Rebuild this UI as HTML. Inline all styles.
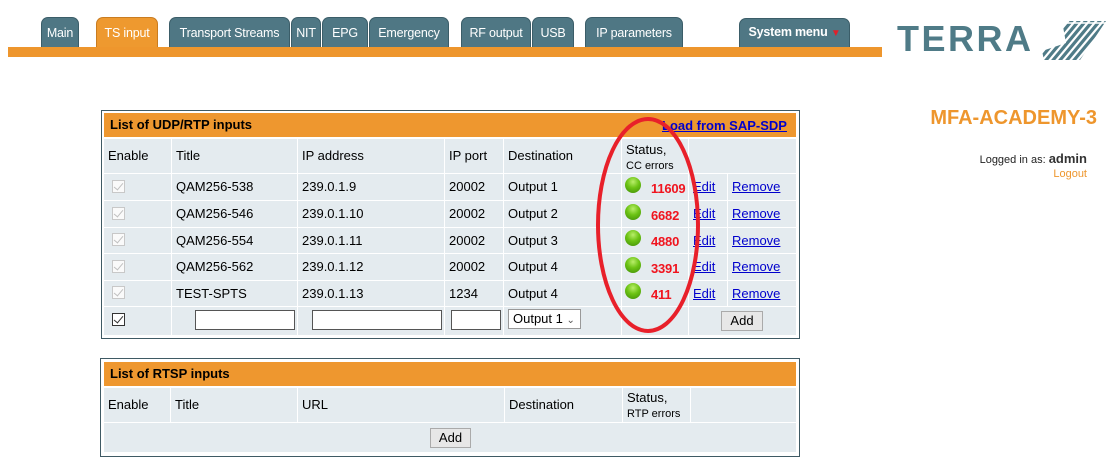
<!DOCTYPE html>
<html><head><meta charset="utf-8"><style>
*{margin:0;padding:0;box-sizing:border-box}
body{width:1115px;height:475px;background:#fff;font-family:"Liberation Sans",Arial,sans-serif;font-size:13px;color:#000;position:relative;overflow:hidden}
.tab{position:absolute;top:17px;height:30px;background:#4f7784;border:1px solid #3b5d68;border-bottom:none;border-radius:7px 7px 0 0;color:#fff;font-size:12.5px;text-align:center;line-height:30px;letter-spacing:-0.2px}
.tab.on{background:#ee992f;border-color:#c97c20}
.bar{position:absolute;left:8px;top:47px;width:874px;height:10px;background:#ee962d}
.a{position:absolute}
.box{position:absolute;border:1px solid #3f5a64;background:#fff}
.hd{position:absolute;background:#ee972f;font-weight:bold;font-size:13px;line-height:24px;padding-left:6px}
.c{position:absolute;background:#e4ebef;line-height:26px;padding-left:4px;white-space:nowrap}
.cb{position:absolute;width:13px;height:13px;border:1px solid #c8c8c8;background:#fafafa}
.cb::after{content:"";position:absolute;left:3px;top:0px;width:4px;height:8px;border:solid #c0c0c0;border-width:0 1px 1px 0;transform:rotate(40deg)}
.cb.k{border-color:#333;background:#fff}
.cb.k::after{border-color:#333}
.led{position:absolute;width:16px;height:16px;border-radius:50%;background:radial-gradient(circle at 50% 30%,#b9ee6a 0,#6cc314 45%,#3d8a06 100%)}
.err{position:absolute;color:#f0141e;font-weight:bold;font-size:13px;letter-spacing:-0.2px}
a{color:#00c;text-decoration:underline}
.inp{position:absolute;height:20px;border:1px solid #555;background:#fff}
.btn{position:absolute;height:20px;border:1px solid #aaa;background:#e7e7e7;text-align:center;line-height:18px;font-size:13px}
</style></head><body>
<div class="tab" style="left:41px;width:38px">Main</div>
<div class="tab on" style="left:96px;width:62px">TS input</div>
<div class="tab" style="left:169px;width:121px">Transport Streams</div>
<div class="tab" style="left:291px;width:30px">NIT</div>
<div class="tab" style="left:322px;width:46px">EPG</div>
<div class="tab" style="left:369px;width:80px">Emergency</div>
<div class="tab" style="left:461px;width:70px">RF output</div>
<div class="tab" style="left:532px;width:42px">USB</div>
<div class="tab" style="left:585px;width:98px">IP parameters</div>
<div class="tab" style="left:739px;top:18px;height:29px;width:111px;font-weight:bold;line-height:26px">System menu <span style="color:#e0202a;font-size:10px">&#9660;</span></div>
<div class="bar"></div>

<div class="a" style="left:897px;top:19px;font-size:36px;line-height:40px;font-weight:bold;color:#4f7b87;letter-spacing:2.5px">TERRA</div>
<svg class="a" style="left:1040px;top:21px" width="68" height="40" viewBox="0 0 68 40">
<defs><clipPath id="cp"><polygon points="22,0 66,0 40,39 4,39 2,30 26,22"/></clipPath></defs>
<g clip-path="url(#cp)" stroke="#4f7b87" stroke-width="3.2">
<line x1="-10" y1="50" x2="40" y2="-10"/><line x1="-3" y1="50" x2="47" y2="-10"/><line x1="4" y1="50" x2="54" y2="-10"/><line x1="11" y1="50" x2="61" y2="-10"/><line x1="18" y1="50" x2="68" y2="-10"/><line x1="25" y1="50" x2="75" y2="-10"/><line x1="32" y1="50" x2="82" y2="-10"/><line x1="39" y1="50" x2="89" y2="-10"/>
</g>
<line x1="22" y1="2" x2="66" y2="2" stroke="#fff" stroke-width="1.5"/>
</svg>

<div class="a" style="left:930px;top:107px;width:167px;text-align:right;color:#ee962d;font-weight:bold;font-size:20px">MFA-ACADEMY-3</div>
<div class="a" style="left:930px;top:151px;width:157px;text-align:right;font-size:11px;color:#222">Logged in as: <b style="font-size:13px;color:#333">admin</b></div>
<div class="a" style="left:930px;top:168px;width:157px;text-align:right;font-size:11px;color:#ee962d">Logout</div>

<div class="box" style="left:101px;top:110px;width:699px;height:229px"></div>
<div class="hd" style="left:104px;top:113px;width:692px">List of UDP/RTP inputs</div>
<a class="a" style="left:662px;top:118px;font-weight:bold;font-size:13px">Load from SAP-SDP</a>
<div class="c" style="left:104px;top:139px;width:67px;height:34px;line-height:34px">Enable</div>
<div class="c" style="left:172px;top:139px;width:125px;height:34px;line-height:34px">Title</div>
<div class="c" style="left:298px;top:139px;width:146px;height:34px;line-height:34px">IP address</div>
<div class="c" style="left:445px;top:139px;width:58px;height:34px;line-height:34px">IP port</div>
<div class="c" style="left:504px;top:139px;width:117px;height:34px;line-height:34px">Destination</div>
<div class="c" style="left:622px;top:139px;width:66px;height:34px;line-height:15px;padding-top:3px">Status,<br><span style="font-size:11px">CC errors</span></div>
<div class="c" style="left:689px;top:139px;width:107px;height:34px"></div>

<div class="c" style="left:104px;top:174px;width:67px;height:26px"></div><div class="cb" style="left:112px;top:180px"></div>
<div class="c" style="left:172px;top:174px;width:125px;height:26px">QAM256-538</div>
<div class="c" style="left:298px;top:174px;width:146px;height:26px">239.0.1.9</div>
<div class="c" style="left:445px;top:174px;width:58px;height:26px">20002</div>
<div class="c" style="left:504px;top:174px;width:117px;height:26px">Output 1</div>
<div class="c" style="left:622px;top:174px;width:66px;height:26px"></div>
<div class="c" style="left:689px;top:174px;width:38px;height:26px"><a>Edit</a></div>
<div class="c" style="left:728px;top:174px;width:68px;height:26px"><a>Remove</a></div>

<div class="c" style="left:104px;top:201px;width:67px;height:26px"></div><div class="cb" style="left:112px;top:207px"></div>
<div class="c" style="left:172px;top:201px;width:125px;height:26px">QAM256-546</div>
<div class="c" style="left:298px;top:201px;width:146px;height:26px">239.0.1.10</div>
<div class="c" style="left:445px;top:201px;width:58px;height:26px">20002</div>
<div class="c" style="left:504px;top:201px;width:117px;height:26px">Output 2</div>
<div class="c" style="left:622px;top:201px;width:66px;height:26px"></div>
<div class="c" style="left:689px;top:201px;width:38px;height:26px"><a>Edit</a></div>
<div class="c" style="left:728px;top:201px;width:68px;height:26px"><a>Remove</a></div>

<div class="c" style="left:104px;top:228px;width:67px;height:25px"></div><div class="cb" style="left:112px;top:233px"></div>
<div class="c" style="left:172px;top:228px;width:125px;height:25px">QAM256-554</div>
<div class="c" style="left:298px;top:228px;width:146px;height:25px">239.0.1.11</div>
<div class="c" style="left:445px;top:228px;width:58px;height:25px">20002</div>
<div class="c" style="left:504px;top:228px;width:117px;height:25px">Output 3</div>
<div class="c" style="left:622px;top:228px;width:66px;height:25px"></div>
<div class="c" style="left:689px;top:228px;width:38px;height:25px"><a>Edit</a></div>
<div class="c" style="left:728px;top:228px;width:68px;height:25px"><a>Remove</a></div>

<div class="c" style="left:104px;top:254px;width:67px;height:26px"></div><div class="cb" style="left:112px;top:260px"></div>
<div class="c" style="left:172px;top:254px;width:125px;height:26px">QAM256-562</div>
<div class="c" style="left:298px;top:254px;width:146px;height:26px">239.0.1.12</div>
<div class="c" style="left:445px;top:254px;width:58px;height:26px">20002</div>
<div class="c" style="left:504px;top:254px;width:117px;height:26px">Output 4</div>
<div class="c" style="left:622px;top:254px;width:66px;height:26px"></div>
<div class="c" style="left:689px;top:254px;width:38px;height:26px"><a>Edit</a></div>
<div class="c" style="left:728px;top:254px;width:68px;height:26px"><a>Remove</a></div>

<div class="c" style="left:104px;top:281px;width:67px;height:25px"></div><div class="cb" style="left:112px;top:286px"></div>
<div class="c" style="left:172px;top:281px;width:125px;height:25px">TEST-SPTS</div>
<div class="c" style="left:298px;top:281px;width:146px;height:25px">239.0.1.13</div>
<div class="c" style="left:445px;top:281px;width:58px;height:25px">1234</div>
<div class="c" style="left:504px;top:281px;width:117px;height:25px">Output 4</div>
<div class="c" style="left:622px;top:281px;width:66px;height:25px"></div>
<div class="c" style="left:689px;top:281px;width:38px;height:25px"><a>Edit</a></div>
<div class="c" style="left:728px;top:281px;width:68px;height:25px"><a>Remove</a></div>

<div class="c" style="left:104px;top:307px;width:67px;height:28px"></div><div class="cb k" style="left:112px;top:313px"></div>
<div class="c" style="left:172px;top:307px;width:125px;height:28px"></div><div class="inp" style="left:195px;top:310px;width:100px"></div>
<div class="c" style="left:298px;top:307px;width:146px;height:28px"></div><div class="inp" style="left:312px;top:310px;width:130px"></div>
<div class="c" style="left:445px;top:307px;width:58px;height:28px"></div><div class="inp" style="left:451px;top:310px;width:50px"></div>
<div class="c" style="left:504px;top:307px;width:117px;height:28px"></div><div class="inp" style="left:508px;top:309px;width:73px;border-color:#999;font-size:13px;line-height:18px;padding-left:4px">Output 1 <span style="font-size:10px;color:#555">&#8964;</span></div>
<div class="c" style="left:622px;top:307px;width:66px;height:28px"></div>
<div class="c" style="left:689px;top:307px;width:107px;height:28px"></div><div class="btn" style="left:721px;top:311px;width:42px">Add</div>

<div class="led" style="left:625px;top:177px"></div><div class="err" style="left:651px;top:181px">11609</div>
<div class="led" style="left:625px;top:204px"></div><div class="err" style="left:651px;top:208px">6682</div>
<div class="led" style="left:625px;top:230px"></div><div class="err" style="left:651px;top:234px">4880</div>
<div class="led" style="left:625px;top:257px"></div><div class="err" style="left:651px;top:261px">3391</div>
<div class="led" style="left:625px;top:283px"></div><div class="err" style="left:651px;top:287px">411</div>

<svg class="a" style="left:590px;top:110px" width="120" height="230"><ellipse cx="58" cy="115" rx="50" ry="106" fill="none" stroke="#e8202a" stroke-width="4"/></svg>

<div class="box" style="left:100px;top:358px;width:700px;height:99px"></div>
<div class="hd" style="left:104px;top:362px;width:692px">List of RTSP inputs</div>
<div class="c" style="left:104px;top:388px;width:66px;height:34px;line-height:34px">Enable</div>
<div class="c" style="left:171px;top:388px;width:126px;height:34px;line-height:34px">Title</div>
<div class="c" style="left:298px;top:388px;width:206px;height:34px;line-height:34px">URL</div>
<div class="c" style="left:505px;top:388px;width:117px;height:34px;line-height:34px">Destination</div>
<div class="c" style="left:623px;top:388px;width:67px;height:34px;line-height:15px;padding-top:2px">Status,<br><span style="font-size:11px">RTP errors</span></div>
<div class="c" style="left:691px;top:388px;width:105px;height:34px"></div>
<div class="c" style="left:104px;top:423px;width:692px;height:29px"></div>
<div class="btn" style="left:430px;top:428px;width:41px">Add</div>
</body></html>
